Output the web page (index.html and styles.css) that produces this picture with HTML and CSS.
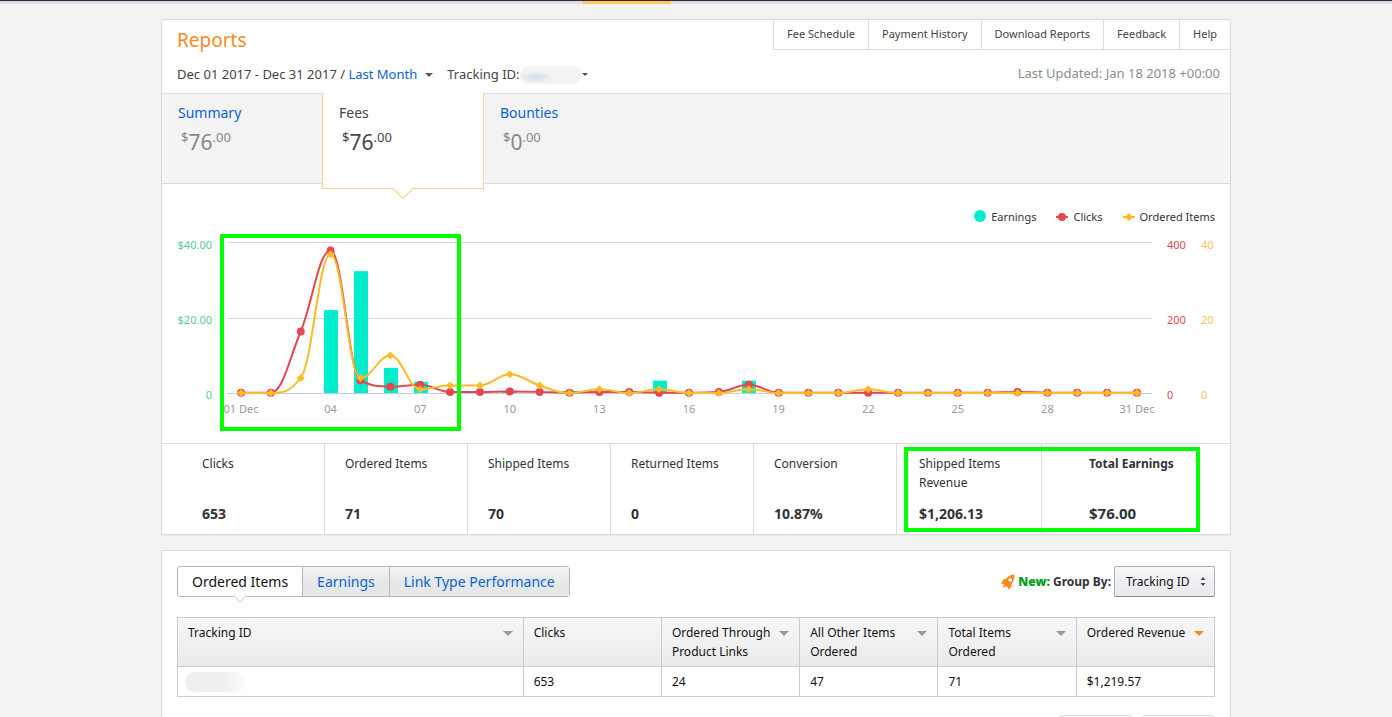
FILE: index.html
```
<!DOCTYPE html>
<html lang="en">
<head>
    <meta charset="UTF-8">
    <meta name="viewport" content="width=device-width, initial-scale=1.0">
    <title>Reports</title>
    <link rel="stylesheet" href="styles.css">
</head>
<body>
    <div class="topbar">
        <div class="topbar-inner">
            <span class="w1"></span><span class="w2"></span><span class="w3"></span><span class="w4"></span><span class="active"></span><span class="w5"></span>
        </div>
    </div>

    <main class="page">
        <section class="card">
            <header class="card-header">
                <div>
                    <h1>Reports</h1>
                    <div class="filters">
                        <span>Dec 01 2017 - Dec 31 2017 / <a href="#">Last Month</a></span>
                        <button class="caret" aria-label="Change period"></button>
                        <span class="tracking">Tracking ID:</span>
                        <span class="smudge"></span>
                        <button class="caret small" aria-label="Change tracking ID"></button>
                    </div>
                </div>
                <div class="header-right">
                    <nav class="links">
                        <a href="#">Fee Schedule</a>
                        <a href="#">Payment History</a>
                        <a href="#">Download Reports</a>
                        <a href="#">Feedback</a>
                        <a href="#">Help</a>
                    </nav>
                    <p class="updated">Last Updated: Jan 18 2018 +00:00</p>
                </div>
            </header>

            <div class="tabs">
                <div class="tab">
                    <a href="#">Summary</a>
                    <p class="price"><small>$</small>76<small>.00</small></p>
                </div>
                <div class="tab selected">
                    <span>Fees</span>
                    <p class="price"><small>$</small>76<small>.00</small></p>
                    <svg class="tab-arrow" width="22" height="12" viewBox="0 0 22 12">
                        <path d="M0 0H22L11 11Z" fill="#fff"/>
                        <path d="M0 .5H1L11 10.500L21 .5H22" fill="none" stroke="#fad489" stroke-width="1.200"/>
                    </svg>
                </div>
                <div class="tab">
                    <a href="#">Bounties</a>
                    <p class="price"><small>$</small>0<small>.00</small></p>
                </div>
            </div>

            <div class="chart">
                <div class="legend">
                    <span><svg width="12" height="14" viewBox="0 0 12 14"><circle cx="6" cy="6" r="6" fill="#00eecb"/></svg>Earnings</span>
                    <span><svg width="12" height="14" viewBox="0 0 12 14"><path d="M0 7H12" stroke="#e34850" stroke-width="2"/><circle cx="6" cy="7" r="4" fill="#e34850"/></svg>Clicks</span>
                    <span><svg width="12" height="14" viewBox="0 0 12 14"><path d="M0 7H12" stroke="#f9bb27" stroke-width="2"/><path d="M6 3L10 7L6 11L2 7Z" fill="#f9bb27"/></svg>Ordered Items</span>
                </div>
                <svg id="plot" viewBox="0 0 1068 213" role="img" aria-label="Earnings, clicks and ordered items by day"></svg>
                <div class="mark mark-chart"></div>
            </div>

            <div class="stats">
                <div class="stat"><h2>Clicks</h2><p>653</p></div>
                <div class="stat"><h2>Ordered Items</h2><p>71</p></div>
                <div class="stat"><h2>Shipped Items</h2><p>70</p></div>
                <div class="stat"><h2>Returned Items</h2><p>0</p></div>
                <div class="stat"><h2>Conversion</h2><p>10.87%</p></div>
                <div class="stat revenue"><h2>Shipped Items Revenue</h2><p>$1,206.13</p></div>
                <div class="stat total"><h2>Total Earnings</h2><p>$76.00</p></div>
                <div class="mark mark-stats"></div>
            </div>
        </section>

        <section class="card details">
            <div class="toolbar">
                <div class="button-group">
                    <button class="selected">Ordered Items<svg class="pointer" width="14" height="8" viewBox="0 0 14 8"><path d="M0 0H14L7 6Z" fill="#fff"/><path d="M1 0L7 6L13 0" fill="none" stroke="#c8cacb"/></svg></button>
                    <button>Earnings</button>
                    <button>Link Type Performance</button>
                </div>
                <div class="group-by">
                    <svg width="14" height="16" viewBox="0 0 14 16">
                        <path fill="#f68b1f" fill-rule="evenodd" d="M13.500 .5C10.500 .5 7.500 1.500 5.500 4.500L2.500 5.500L0 9.500L2.500 10L3 11L1.500 13.500L5 12.500L6.500 13L7.500 15.500L10.500 12.500L10.800 9.500C13 7 13.500 4 13.500 .5ZM9.200 4.200A1.800 1.800 0 1 1 9.200 7.800A1.800 1.800 0 1 1 9.200 4.200Z"/>
                    </svg>
                    <label for="group"><b>New:</b> Group By:</label>
                    <div class="select">
                        <select id="group">
                            <option>Tracking ID</option>
                        </select>
                        <svg width="6" height="9" viewBox="0 0 6 9"><path d="M3 0L5.500 3H.5ZM3 9L.5 6H5.500Z" fill="#444"/></svg>
                    </div>
                </div>
            </div>

            <table>
                <thead>
                    <tr>
                        <th class="col-id"><div>Tracking ID <i class="sort"></i></div></th>
                        <th><div>Clicks</div></th>
                        <th><div>Ordered Through Product Links <i class="sort"></i></div></th>
                        <th><div>All Other Items Ordered <i class="sort"></i></div></th>
                        <th><div>Total Items Ordered <i class="sort"></i></div></th>
                        <th><div>Ordered Revenue <i class="sort on"></i></div></th>
                    </tr>
                </thead>
                <tbody>
                    <tr>
                        <td><span class="smudge grey"></span></td>
                        <td>653</td>
                        <td>24</td>
                        <td>47</td>
                        <td>71</td>
                        <td>$1,219.57</td>
                    </tr>
                </tbody>
            </table>

            <div class="pager">
                <button aria-label="Previous page" disabled></button>
                <button aria-label="Next page" disabled></button>
            </div>
        </section>
    </main>
    <script src="chart.js"></script>
</body>
</html>
```
FILE: styles.css
```
* {
    box-sizing: border-box;
}
body {
    margin: 0;
    background-color: #f3f3f3;
    color: #2f3337;
    font-family: "Noto Sans", "Open Sans", sans-serif;
    font-size: 12px;
    line-height: 19px;
    overflow-x: hidden;
}
h1, h2, p {
    margin: 0;
    font-weight: normal;
}
a {
    color: #0b63ce;
    text-decoration: none;
}
button, select {
    font: inherit;
    cursor: pointer;
}

/* top bar */
.topbar {
    height: 4px;
    background-color: #e0dce2;
    border-top: 1px solid #2b2a3a;
}
.topbar-inner {
    max-width: 1070px;
    margin: 0 auto;
    display: flex;
}
.topbar-inner span {
    height: 3px;
}
.topbar-inner .w1 { flex: 0 0 69px; }
.topbar-inner .w2 { flex: 0 0 147px; }
.topbar-inner .w3 { flex: 0 0 121px; }
.topbar-inner .w4 { flex: 0 0 85px; }
.topbar-inner .active {
    flex: 0 0 88px;
    background-color: #ffc661;
}

.page {
    max-width: 1070px;
    margin: 15px auto 0;
}
.card {
    background-color: #fff;
    border: 1px solid #dcdcdc;
    border-radius: 2px;
    box-shadow: 0 1px 2px rgba(0, 0, 0, 0.06);
    margin-bottom: 15px;
}
.card-header {
    display: flex;
    justify-content: space-between;
    height: 74px;
    border-bottom: 1px solid #e0e0e0;
    padding-left: 15px;
}
h1 {
    color: #f68b1f;
    font-size: 19px;
    line-height: 24px;
    margin-top: 8px;
}
.filters {
    display: flex;
    align-items: center;
    margin-top: 13px;
    font-size: 13px;
    color: #444;
}
.caret {
    border: 4px solid transparent;
    border-top-color: #555;
    border-bottom: 0;
    background: none;
    padding: 0;
    margin-left: 8px;
}
.caret.small {
    border-width: 3px;
    border-bottom: 0;
    margin-left: 0;
}
.tracking {
    margin-left: 14px;
}
.smudge {
    display: inline-block;
    width: 62px;
    height: 18px;
    border-radius: 9px;
    background: radial-gradient(ellipse 16px 6px at 16px 11px, #c8deee, transparent), #f3f3f3;
}
.smudge.grey {
    width: 60px;
    height: 20px;
    margin-left: -3px;
    border-radius: 10px;
    background: linear-gradient(90deg, #efefef 60%, #fafafa);
    vertical-align: middle;
}
.header-right {
    display: flex;
    flex-direction: column;
    align-items: flex-end;
}
.links {
    display: flex;
    border-bottom: 1px solid #dcdcdc;
}
.links a {
    padding: 5px 13px 6px;
    line-height: 18px;
    font-size: 11px;
    color: #444;
    border-left: 1px solid #dcdcdc;
}
.updated {
    margin-top: 14px;
    padding-right: 10px;
    font-size: 13px;
    color: #8c8c8c;
}

/* summary tabs */
.tabs {
    display: flex;
    height: 90px;
    background-color: #f3f3f3;
    border-bottom: 1px solid #dcdcdc;
}
.tab {
    width: 161px;
    padding: 9px 16px;
    font-size: 14px;
    line-height: 20px;
}
.tab.selected {
    position: relative;
    width: 162px;
    height: 96px;
    margin: -1px 0 0 -1px;
    padding-top: 10px;
    color: #444;
    background-color: #fff;
    border: 1px solid #fad489;
    border-top: 0;
}
.tab-arrow {
    position: absolute;
    left: 50%;
    bottom: -12px;
    margin-left: -11px;
}
.price {
    display: flex;
    margin: 4px 0 0 3px;
    font-size: 21px;
    line-height: 30px;
    color: #888;
}
.price small {
    font-size: 13px;
    line-height: 21px;
}
.selected .price {
    color: #444;
}

/* chart */
.chart {
    position: relative;
    padding-top: 24px;
}
.legend {
    display: flex;
    justify-content: flex-end;
    gap: 20px;
    padding-right: 15px;
    height: 22px;
    line-height: 18px;
    font-size: 11px;
}
.legend span {
    display: flex;
    align-items: center;
    gap: 5px;
    height: 18px;
}
#plot {
    display: block;
    width: 100%;
    font-size: 11px;
}
.axis-earn { fill: #58c9a7; }
.axis-click { fill: #e34850; }
.axis-item { fill: #fbc15c; }
.axis-day { fill: #999; }
.mark {
    position: absolute;
    border: 4px solid #00ff00;
    pointer-events: none;
}
.mark-chart {
    left: 58px;
    top: 50px;
    width: 241px;
    height: 197px;
}

/* totals */
.stats {
    position: relative;
    display: grid;
    grid-template-columns: 163fr 143fr 143fr 143fr 143fr 145fr 188fr;
    border-top: 1px solid #dcdcdc;
}
.stat {
    display: flex;
    flex-direction: column;
    justify-content: space-between;
    height: 90px;
    padding: 10px 20px;
    border-right: 1px solid #dcdcdc;
}
.stat:first-child {
    padding-left: 40px;
}
.stat h2 {
    font-size: 12px;
    line-height: 19px;
}
.stat p {
    font-size: 14px;
    line-height: 20px;
    font-weight: bold;
}
.stat.revenue {
    padding-left: 22px;
}
.stat.total {
    padding-left: 47px;
    border-right: 0;
}
.stat.total h2 {
    font-weight: bold;
}
.stat.total p {
    font-size: 15px;
    line-height: 22px;
}
.mark-stats {
    right: 30px;
    top: 3px;
    width: 296px;
    height: 85px;
}

/* details */
.details {
    padding: 15px;
}
.toolbar {
    display: flex;
    justify-content: space-between;
    align-items: center;
    margin-bottom: 20px;
}
.button-group {
    display: flex;
    border: 1px solid #b5b8ba;
    border-radius: 3px;
}
.button-group button {
    position: relative;
    padding: 0 14px;
    height: 29px;
    border: 0;
    border-left: 1px solid #b5b8ba;
    background: linear-gradient(#f4f5f5, #e6e8e8 50%);
    color: #0b63ce;
    font-size: 14px;
}
.button-group .selected {
    border-left: 0;
    border-radius: 3px;
    background: #fff;
    color: #111;
}
.pointer {
    position: absolute;
    left: 50%;
    bottom: -8px;
    margin-left: -7px;
}
.group-by {
    display: flex;
    align-items: center;
    gap: 3px;
    font-size: 12px;
    font-weight: bold;
}
.group-by b {
    color: #00a020;
}
.select {
    position: relative;
    font-weight: normal;
}
.select select {
    appearance: none;
    height: 31px;
    padding: 0 24px 0 11px;
    border: 1px solid #adb1b8;
    border-bottom-color: #888c8c;
    border-radius: 2px;
    background: linear-gradient(#f7f8fa, #e7e9ec);
    color: #111;
    font-size: 12px;
}
.select svg {
    position: absolute;
    right: 9px;
    top: 11px;
    pointer-events: none;
}
table {
    width: 100%;
    border-collapse: collapse;
    table-layout: fixed;
    color: #111;
}
th, td {
    border: 1px solid #ccc;
    padding: 5px 10px;
    text-align: left;
    vertical-align: top;
    font-weight: normal;
}
thead tr {
    background: linear-gradient(#f7f7f7, #eaeaea);
}
.col-id {
    width: 33.33%;
}
th {
    height: 49px;
}
td {
    height: 30px;
}
td:first-child {
    padding-top: 4px;
    padding-bottom: 4px;
}
th div {
    display: flex;
    justify-content: space-between;
}
.sort {
    flex: none;
    border: 5px solid transparent;
    border-top-color: #999;
    border-bottom: 0;
    height: 0;
    margin: 8px 0 0 2px;
}
.sort.on {
    border-top-color: #f68b1f;
}
.pager {
    display: flex;
    justify-content: flex-end;
    gap: 10px;
    margin-top: 18px;
}
.pager button {
    width: 73px;
    height: 30px;
    border: 1px solid #ddd;
    border-radius: 3px;
    background-color: #f7f7f7;
}
```
FILE: chart.js
```
const earnings = [0, 0, 0, 22.1, 32.5, 6.7, 3, 0.1, 0.4, 0.6, 0, 0.6, 0, 0, 3.3, 0, 0, 3.3, 0.3, 0, 0, 0, 0, 0, 0, 0, 0, 0, 0, 0, 0];
const clicks = [1, 1, 164, 380, 34, 17, 22, 3, 3, 4, 3, 1, 3, 3, 1, 1, 3, 22, 1, 1, 1, 1, 1, 1, 1, 1, 3, 1, 1, 1, 1];
const items = [0, 0, 4, 37, 4, 10, 1, 2, 2, 5, 2, 0, 1, 0, 1, 0, 0, 1, 0, 0, 0, 1, 0, 0, 0, 0, 0, 0, 0, 0, 0];

const top_ = 12, base = 163, height = 150;
const px = i => 79 + i * 896 / 30;
const py = (v, max) => base - v / max * height;

// smooth line through the points, without overshoot
function spline(p) {
    let d = `M${p[0][0]} ${p[0][1]}`;
    let out = p[0];
    for (let i = 1; i < p.length; i++) {
        const [x, y] = p[i], prev = p[i - 1], next = p[i + 1];
        let left = [x, y], right = [x, y];
        if (next) {
            const lx = (1.5 * x + prev[0]) / 2.5, rx = (1.5 * x + next[0]) / 2.5;
            let ly = (1.5 * y + prev[1]) / 2.5, ry = (1.5 * y + next[1]) / 2.5;
            const c = (ry - ly) * (rx - x) / (rx - lx) + y - ry;
            ly += c;
            ry += c;
            const lo = Math.min(prev[1], y), hi = Math.max(prev[1], y);
            if (ly < lo || ly > hi) {
                ly = ly < lo ? lo : hi;
                ry = 2 * y - ly;
            }
            const lo2 = Math.min(next[1], y), hi2 = Math.max(next[1], y);
            if (ry < lo2 || ry > hi2) {
                ry = ry < lo2 ? lo2 : hi2;
                ly = 2 * y - ry;
            }
            left = [lx, ly];
            right = [rx, ry];
        }
        d += `C${out[0]} ${out[1]} ${left[0]} ${left[1]} ${x} ${y}`;
        out = right;
    }
    return d;
}

let svg = '';
[top_ + 0.5, 88.5, base + 0.5].forEach((y, i) => {
    svg += `<path d="M65 ${y}H990" stroke="${i == 2 ? '#c0d0e0' : '#d8d8d8'}"/>`;
});

earnings.forEach((v, i) => {
    if (v) svg += `<rect x="${Math.ceil(px(i)) - 7}" y="${py(v, 40)}" width="14" height="${base - py(v, 40)}" fill="#00eecb"/>`;
});

const c = clicks.map((v, i) => [px(i), py(v, 400)]);
const o = items.map((v, i) => [px(i), py(v, 40)]);
svg += `<path d="${spline(c)}" fill="none" stroke="#e34850" stroke-width="2"/>`;
c.forEach(p => svg += `<circle cx="${p[0]}" cy="${p[1]}" r="4" fill="#e34850"/>`);
svg += `<path d="${spline(o)}" fill="none" stroke="#f9bb27" stroke-width="2"/>`;
o.forEach(p => svg += `<path d="M${p[0]} ${p[1] - 4}l4 4l-4 4l-4 -4z" fill="#f9bb27"/>`);

const label = (x, y, text, cls, anchor) => {
    svg += `<text x="${x}" y="${y}" class="${cls}" text-anchor="${anchor}">${text}</text>`;
};
['$40.00', '$20.00', '0'].forEach((t, i) => label(50, 19 + i * 75, t, 'axis-earn', 'end'));
['400', '200', '0'].forEach((t, i) => label(1005, 19 + i * 75, t, 'axis-click', 'start'));
['40', '20', '0'].forEach((t, i) => label(1039, 19 + i * 75, t, 'axis-item', 'start'));
for (let i = 0; i < 31; i += 3) {
    let t = String(i + 1).padStart(2, '0');
    if (i == 0 || i == 30) t += ' Dec';
    label(px(i), 183, t, 'axis-day', 'middle');
}

document.getElementById('plot').innerHTML = svg;
```
